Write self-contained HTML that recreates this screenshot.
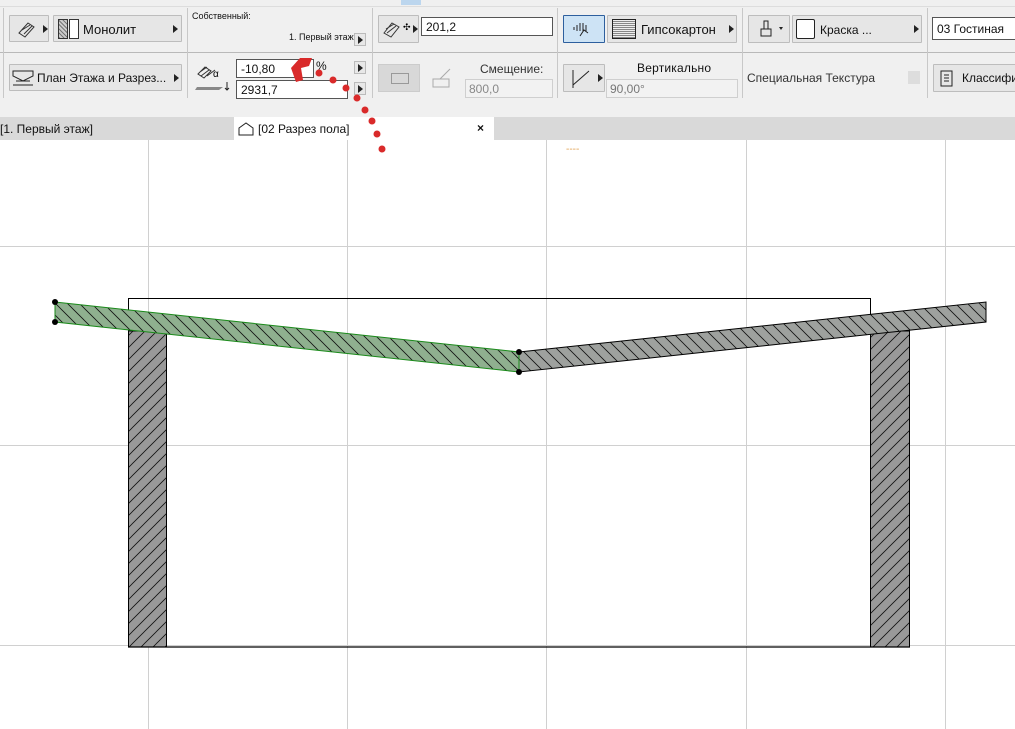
<!DOCTYPE html>
<html><head><meta charset="utf-8"><style>
*{margin:0;padding:0;box-sizing:border-box}
body{width:1015px;height:729px;overflow:hidden;background:#fff;font-family:"Liberation Sans",sans-serif;font-size:12px;color:#111;position:relative}
.a{position:absolute}
.tb{left:0;top:0;width:1015px;height:117px;background:#f0f0f0}
.btn{position:absolute;background:#e6e6e6;border:1px solid #bdbdbd;border-radius:1px}
.inp{position:absolute;background:#fff;border:1px solid #555;padding:2px 4px;font-size:12px}
.dis{position:absolute;background:#f2f2f2;border:1px solid #cfcfcf;color:#888;padding:2px 3px;font-size:12px}
.sep{position:absolute;width:1px;background:#c8c8c8}
.tri{position:absolute;width:0;height:0;border-top:4px solid transparent;border-bottom:4px solid transparent;border-left:5px solid #222}
.sm{position:absolute;width:12px;height:13px;border:1px solid #bbb;background:#e8e8e8}
.sm:after{content:"";position:absolute;left:3px;top:2px;border-top:4px solid transparent;border-bottom:4px solid transparent;border-left:5px solid #222}
</style></head><body>
<div class="a tb"></div>
<div class="a" style="left:0;top:6px;width:1015px;height:1px;background:#ddd"></div>
<div class="a" style="left:401px;top:0;width:20px;height:5px;background:#bcd6ee"></div>
<div class="a" style="left:0;top:52px;width:1015px;height:1px;background:#b9b9b9"></div>
<div class="sep" style="left:3px;top:8px;height:90px"></div>
<div class="sep" style="left:187px;top:8px;height:90px"></div>
<div class="sep" style="left:372px;top:8px;height:90px"></div>
<div class="sep" style="left:557px;top:8px;height:90px"></div>
<div class="sep" style="left:742px;top:8px;height:90px"></div>
<div class="sep" style="left:927px;top:8px;height:90px"></div>
<!-- row1 -->
<div class="btn" style="left:9px;top:15px;width:40px;height:27px"><svg width="38" height="25"><path d="M9 17 L18 7 L24 11 L15 21 Z M12 14 L20 9 M14 18 L22 10" stroke="#333" fill="none"/></svg><div class="tri" style="left:33px;top:9px"></div></div>
<div class="btn" style="left:53px;top:15px;width:129px;height:27px"><div class="a" style="left:4px;top:3px;width:10px;height:20px;border:1px solid #333;background:repeating-linear-gradient(45deg,#777 0 1px,#ccc 1px 3px)"></div><div class="a" style="left:15px;top:3px;width:10px;height:20px;border:1px solid #333;background:#fff"></div><span class="a" style="left:29px;top:6px;font-size:13px">Монолит</span><div class="tri" style="left:119px;top:9px"></div></div>
<span class="a" style="left:192px;top:11px;font-size:9px">Собственный:</span>
<span class="a" style="left:289px;top:32px;font-size:9px">1. Первый этаж</span>
<div class="sm" style="left:354px;top:33px"></div>
<div class="btn" style="left:378px;top:15px;width:41px;height:28px"><svg width="40" height="27"><path d="M5 17 L13 7 L20 11 L12 21 Z M7 13 L15 8 M8 17 L17 10" stroke="#333" fill="none"/><text x="24" y="14" font-size="9">✣</text></svg><div class="tri" style="left:34px;top:9px"></div></div>
<div class="inp" style="left:421px;top:17px;width:132px;height:19px">201,2</div>
<div class="btn" style="left:563px;top:15px;width:42px;height:28px;background:#cde3f5;border-color:#2d5f9e"><svg width="40" height="26"><path d="M10 14v-3M13 15v-6M16 15v-8M19 15v-8M22 15v-6M16 20l4-6 4 3" stroke="#222" fill="none"/></svg></div>
<div class="btn" style="left:607px;top:15px;width:130px;height:28px"><div class="a" style="left:4px;top:3px;width:24px;height:20px;border:1px solid #222;background:repeating-linear-gradient(0deg,#888 0 1px,#eee 1px 2px)"></div><span class="a" style="left:33px;top:6px;font-size:13px">Гипсокартон</span><div class="tri" style="left:121px;top:9px"></div></div>
<div class="btn" style="left:748px;top:15px;width:42px;height:28px"><svg width="40" height="26"><path d="M12 20h10v-7h-10zM15 13v-8h4v8" stroke="#222" fill="none"/><path d="M30 11l4 0-2 3z" fill="#222"/></svg></div>
<div class="btn" style="left:792px;top:15px;width:130px;height:28px"><div class="a" style="left:3px;top:3px;width:19px;height:20px;border:1px solid #222;background:#fff;border-radius:2px"></div><span class="a" style="left:27px;top:7px;font-size:12px">Краска ...</span><div class="tri" style="left:121px;top:9px"></div></div>
<div class="inp" style="left:932px;top:17px;width:90px;height:23px;padding-top:4px">03 Гостиная</div>
<!-- row2 -->
<div class="btn" style="left:9px;top:64px;width:173px;height:27px"><svg width="30" height="25"><path d="M3 6h20v5l-10 5-10-5zM3 20h20M6 16h14" stroke="#222" fill="none"/></svg><span class="a" style="left:27px;top:6px;font-size:12px">План Этажа и Разрез...</span><div class="tri" style="left:164px;top:9px"></div></div>
<svg class="a" style="left:193px;top:60px" width="40" height="38"><path d="M5 14l7-7 6 4-7 7z M7 12l7-5 M8 16l8-6 M14 16l8-6" stroke="#333" fill="none"/><text x="20" y="17" font-size="10">α</text><path d="M2 30h24l4-3H4z" fill="#888"/><path d="M34 22v8M32 28l2 2 2-2" stroke="#222" fill="none"/></svg>
<div class="inp" style="left:236px;top:59px;width:78px;height:19px">-10,80</div>
<span class="a" style="left:316px;top:59px">%</span>
<div class="inp" style="left:236px;top:80px;width:112px;height:19px">2931,7</div>
<div class="sm" style="left:354px;top:61px"></div>
<div class="sm" style="left:354px;top:82px"></div>
<div class="a" style="left:378px;top:64px;width:42px;height:28px;background:#d8d8d8;border:1px solid #ccc"><div class="a" style="left:12px;top:8px;width:18px;height:11px;border:1px solid #999"></div></div>
<svg class="a" style="left:430px;top:65px" width="26" height="26"><path d="M3 14h16v8H3zM10 14l10-10" stroke="#aaa" fill="none"/></svg>
<span class="a" style="left:480px;top:62px;color:#333">Смещение:</span>
<div class="dis" style="left:465px;top:79px;width:88px;height:19px">800,0</div>
<div class="btn" style="left:563px;top:64px;width:42px;height:28px"><svg width="40" height="26"><path d="M9 5v18M9 20l16-14" stroke="#222" fill="none"/></svg><div class="tri" style="left:34px;top:9px"></div></div>
<span class="a" style="left:637px;top:61px;font-size:12px;letter-spacing:0.2px">Вертикально</span>
<div class="dis" style="left:606px;top:79px;width:132px;height:19px;color:#777">90,00°</div>
<span class="a" style="left:747px;top:71px;color:#333">Специальная Текстура</span>
<div class="a" style="left:908px;top:71px;width:12px;height:13px;background:#ddd"></div>
<div class="btn" style="left:933px;top:64px;width:90px;height:28px"><svg width="30" height="26"><path d="M7 6h11v15H7zM10 10h5M10 13h5M10 16h5" stroke="#222" fill="none"/></svg><span class="a" style="left:28px;top:6px;font-size:12px">Классифик</span></div>
<!-- tabs -->
<div class="a" style="left:0;top:117px;width:1015px;height:23px;background:#d9d9d9"></div>
<span class="a" style="left:0;top:122px">[1. Первый этаж]</span>
<div class="a" style="left:234px;top:117px;width:260px;height:23px;background:#fff"></div>
<svg class="a" style="left:238px;top:122px" width="18" height="14"><path d="M1 6L8 1l7 5v7H1z" stroke="#222" fill="none"/></svg>
<span class="a" style="left:258px;top:122px">[02 Разрез пола]</span>
<span class="a" style="left:477px;top:121px;font-weight:bold">×</span>
<!-- canvas -->
<svg class="a" style="left:0;top:140px" width="1015" height="589">
<defs>
<pattern id="h1" width="12" height="12" patternUnits="userSpaceOnUse"><rect width="12" height="12" fill="#999"/><path d="M-3 3L3 -3M0 12L12 0M9 15L15 9" stroke="#111" stroke-width="0.8"/></pattern>
<pattern id="h2" width="12" height="12" patternUnits="userSpaceOnUse"><rect width="12" height="12" fill="#9ea19e"/><path d="M-3 9L3 15M0 0L12 12M9 -3L15 3" stroke="#111" stroke-width="0.8"/></pattern>
<pattern id="h3" width="12" height="12" patternUnits="userSpaceOnUse"><rect width="12" height="12" fill="#8fb08f"/><path d="M-3 9L3 15M0 0L12 12M9 -3L15 3" stroke="#111" stroke-width="0.8"/></pattern>
</defs>
<g stroke="#d0d0d0" stroke-width="1">
<line x1="148.5" y1="0" x2="148.5" y2="589"/><line x1="347.5" y1="0" x2="347.5" y2="589"/><line x1="546.5" y1="0" x2="546.5" y2="589"/><line x1="746.5" y1="0" x2="746.5" y2="589"/><line x1="945.5" y1="0" x2="945.5" y2="589"/>
<line x1="0" y1="106.5" x2="1015" y2="106.5"/><line x1="0" y1="305.5" x2="1015" y2="305.5"/><line x1="0" y1="505.5" x2="1015" y2="505.5"/>
</g>
<text x="566" y="12" fill="#e0a050" font-size="10">----</text>
<path d="M128.5 192 V158.5 H870.5 V192" stroke="#000" fill="none"/>
<rect x="128.5" y="191" width="38" height="316" fill="url(#h1)" stroke="#000"/>
<rect x="870.5" y="191" width="39" height="316" fill="url(#h1)" stroke="#000"/>
<line x1="128" y1="507" x2="910" y2="507" stroke="#000" stroke-width="1.2"/>
<path d="M519 212 L986 162 L986 182 L519 232 Z" fill="url(#h2)" stroke="#000"/>
<path d="M55 162 L519 212 L519 232 L55 182 Z" fill="url(#h3)" stroke="#1a8a1a"/>
<g fill="#000"><circle cx="55" cy="162" r="3"/><circle cx="55" cy="182" r="3"/><circle cx="519" cy="212" r="3"/><circle cx="519" cy="232" r="3"/></g>
</svg>
<!-- red annotation -->
<svg class="a" style="left:0;top:0" width="1015" height="160">
<path d="M291 68 L300 58 L312 58 L309 66 L301 68 L303 80 L296 82 Z" fill="#d92a2a"/>
<g fill="#d92a2a"><circle cx="319" cy="73" r="3.5"/><circle cx="333" cy="80" r="3.5"/><circle cx="346" cy="88" r="3.5"/><circle cx="357" cy="98" r="3.5"/><circle cx="365" cy="110" r="3.5"/><circle cx="372" cy="121" r="3.5"/><circle cx="377" cy="134" r="3.5"/><circle cx="382" cy="149" r="3.5"/></g>
</svg>
</body></html>
